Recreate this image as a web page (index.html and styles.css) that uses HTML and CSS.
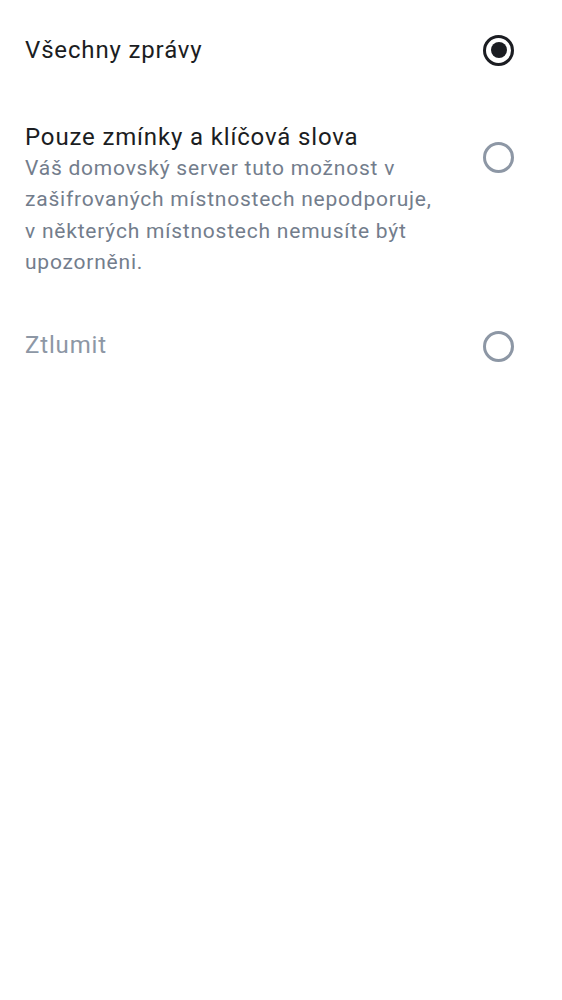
FILE: index.html
```html
<!DOCTYPE html>
<html lang="cs">
<head>
<meta charset="utf-8">
<link rel="stylesheet" href="styles.css">
</head>
<body>
<div class="list">
  <div class="row row-first">
    <div class="text">
      <div class="title">Všechny zprávy</div>
    </div>
    <span class="radio checked"></span>
  </div>
  <div class="row row-second">
    <div class="text">
      <div class="title">Pouze zmínky a klíčová slova</div>
      <div class="desc">Váš domovský server tuto možnost v zašifrovaných místnostech nepodporuje, v některých místnostech nemusíte být upozorněni.</div>
    </div>
    <span class="radio radio-second"></span>
  </div>
  <div class="row row-third">
    <div class="text">
      <div class="title muted">Ztlumit</div>
    </div>
    <span class="radio"></span>
  </div>
</div>
</body>
</html>
```

FILE: styles.css
```css
html, body {
  margin: 0;
  padding: 0;
  background: #ffffff;
}
body {
  font-family: Roboto, "Noto Sans", sans-serif;
  color: #1b1d22;
}
.list {
  display: flex;
  flex-direction: column;
  padding: 0 48px 0 25px;
}
.row {
  display: flex;
  justify-content: space-between;
  align-items: flex-start;
  gap: 10px;
}
.row-first {
  margin-top: 34.5px;
  align-items: center;
}
.row-second {
  margin-top: 57.6px;
}
.row-third {
  margin-top: 52.4px;
}
.text {
  width: 414px;
}
.title {
  font-size: 24px;
  line-height: 28px;
  letter-spacing: 0.85px;
}
.title.muted {
  color: #8d97a5;
}
.desc {
  font-size: 21px;
  line-height: 31.5px;
  letter-spacing: 0.78px;
  color: #737d8c;
  margin-top: 1.8px;
}
.radio {
  box-sizing: border-box;
  flex: none;
  width: 31px;
  height: 31px;
  border: 3px solid #8d97a5;
  border-radius: 50%;
  display: flex;
  align-items: center;
  justify-content: center;
}
.radio.checked {
  border-color: #1b1d22;
}
.radio.checked::after {
  content: "";
  width: 16px;
  height: 16px;
  border-radius: 50%;
  background: #1b1d22;
}
.radio-second {
  margin-top: 19px;
}
```
